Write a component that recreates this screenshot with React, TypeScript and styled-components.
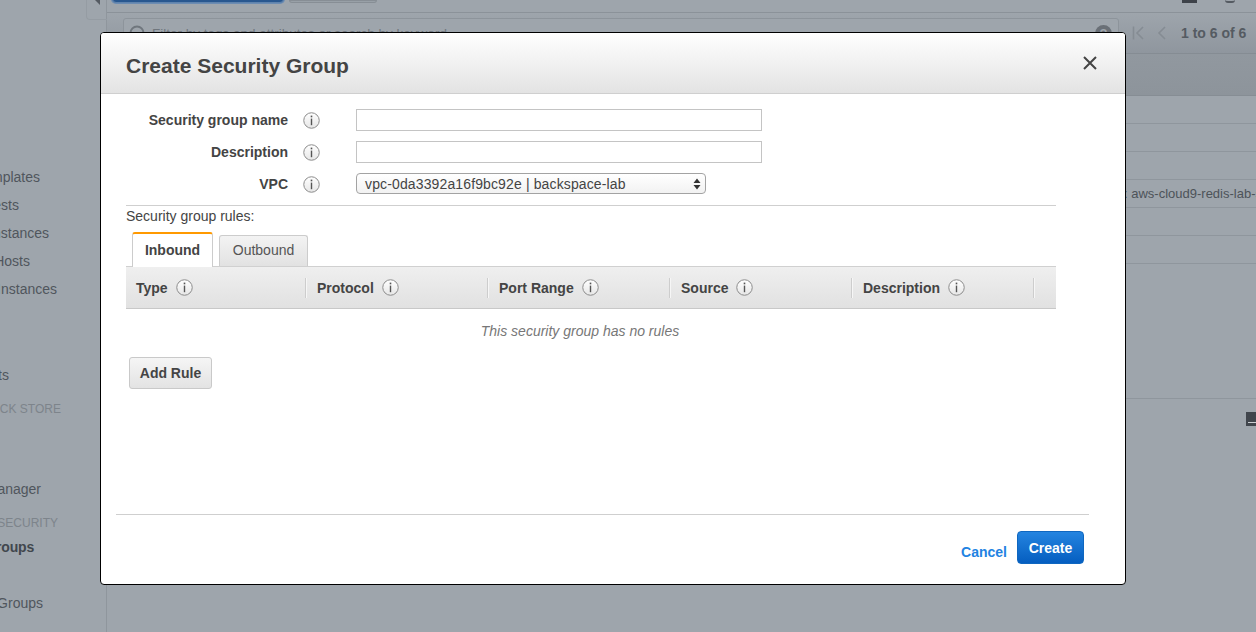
import React from "react";
import styled, { createGlobalStyle } from "styled-components";

const Global = createGlobalStyle`
  html, body { margin: 0; padding: 0; height: 100%; background: #9ea5ac; }
  * { box-sizing: border-box; }
  body { font-family: "Liberation Sans", Arial, sans-serif; color: #444; }
`;

const Page = styled.div`
  position: relative;
  width: 1256px;
  height: 632px;
  display: flex;
  overflow: hidden;
  background: #9ea5ac;
`;

/* --- dimmed console behind the dialog --- */
const Sidebar = styled.nav`
  width: 107px;
  flex: none;
  height: 632px;
  border-right: 1px solid #8f969d;
  position: relative;
`;
const CollapseTab = styled.div`
  position: absolute;
  left: 86px;
  top: -6px;
  width: 21px;
  height: 26px;
  border: 1px solid #959ca3;
  border-right: none;
  border-radius: 0 0 0 4px;
  svg { position: absolute; left: 7px; top: 4px; }
`;
const NavList = styled.ul`
  list-style: none;
  margin: 0;
  padding: 0;
  display: flex;
  flex-direction: column;
`;
const NavItem = styled.li<{ $end: number; $top: number; $bold?: boolean; $caps?: boolean }>`
  width: ${(p) => p.$end}px;
  margin-top: ${(p) => p.$top}px;
  height: 20px;
  line-height: 20px;
  display: flex;
  justify-content: flex-end;
  white-space: nowrap;
  font-size: ${(p) => (p.$caps ? 12 : 14)}px;
  font-weight: ${(p) => (p.$bold ? 700 : 400)};
  letter-spacing: ${(p) => (p.$bold ? "-0.2px" : "0")};
  color: ${(p) => (p.$caps ? "#7d848b" : p.$bold ? "#41474e" : "#50565d")};
`;

const Main = styled.main`
  flex: 1;
  min-width: 0;
  display: flex;
  flex-direction: column;
`;
const TopBar = styled.div`
  height: 13px;
  flex: none;
  padding-left: 5px;
  display: flex;
  gap: 5px;
  border-bottom: 1px solid #8b9299;
  position: relative;
`;
const TopPrimary = styled.div`
  width: 172px;
  height: 6px;
  margin-top: -3px;
  background: #28578f;
  border: 1px solid #5f83ad;
  border-radius: 0 0 4px 4px;
  box-shadow: 0 0 0 1px #6c8cb2;
`;
const TopSecondary = styled.div`
  width: 88px;
  height: 3px;
  background: #98a0a7;
  border: 1px solid #878e95;
  border-radius: 0 0 3px 3px;
`;
const TopIcons = styled.div`
  position: absolute;
  right: 21px;
  top: 0;
  display: flex;
  gap: 28px;
`;
const TopIcon = styled.span<{ $round?: boolean }>`
  width: ${(p) => (p.$round ? 10 : 15)}px;
  height: 3px;
  background: ${(p) => (p.$round ? "transparent" : "#3d4249")};
  border-bottom: ${(p) => (p.$round ? "2px solid #555b62" : "none")};
  border-radius: ${(p) => (p.$round ? "0 0 6px 6px" : "0")};
`;
const FilterBar = styled.div`
  height: 41px;
  flex: none;
  display: flex;
  align-items: flex-start;
  padding: 5px 8px 0 16px;
  background: linear-gradient(#9ea5ac, #8f969e);
  border-bottom: 1px solid #858c93;
`;
const Filter = styled.div`
  width: 996px;
  height: 30px;
  flex: none;
  border: 1px solid #8d949b;
  border-radius: 3px;
  background: #9ea5ac;
  display: flex;
  align-items: center;
  padding: 0 6px 0 5px;
  gap: 7px;
  font-size: 13.5px;
  color: #6f767d;
  white-space: nowrap;
`;
const FilterText = styled.span`
  flex: 1;
`;
const HelpDot = styled.span`
  width: 17px;
  height: 17px;
  border-radius: 50%;
  background: #6a7077;
  color: #9ea5ac;
  font-size: 13px;
  font-weight: 700;
  line-height: 17px;
  text-align: center;
  flex: none;
`;
const Pager = styled.div`
  display: flex;
  align-items: center;
  height: 30px;
  margin-left: 13px;
  font-size: 14px;
  font-weight: 700;
  color: #555b62;
  white-space: nowrap;
  svg { flex: none; }
`;
const PagerGap = styled.span`
  width: 8px;
  flex: none;
`;
const PagerLabel = styled.span`
  margin-left: 13px;
`;
const TableHead = styled.div`
  height: 42px;
  flex: none;
  background: linear-gradient(#91989f, #8d949b);
  border-bottom: 1px solid #868d94;
`;
const Row = styled.div`
  height: 28px;
  flex: none;
  border-bottom: 1px solid #8f969d;
  display: flex;
  align-items: center;
  justify-content: flex-end;
  overflow: hidden;
  font-size: 13px;
  color: #4d5359;
  white-space: nowrap;
`;
const RowText = styled.span`
  width: 132px;
  overflow: hidden;
`;
const DetailPane = styled.div`
  margin-top: 134px;
  flex: 1;
  border-top: 1px solid #8f969d;
  display: flex;
  justify-content: flex-end;
  padding-top: 13px;
`;
const PaneIcon = styled.div`
  width: 10px;
  height: 14px;
  background: #40454c;
  border-bottom: 2px solid #40454c;
  position: relative;
  &::after {
    content: "";
    position: absolute;
    left: 2px;
    right: 0;
    bottom: 1px;
    height: 1px;
    background: #c9cdd1;
  }
`;

/* --- dialog --- */
const Dialog = styled.section`
  position: absolute;
  left: 100px;
  top: 32px;
  width: 1026px;
  height: 553px;
  background: #fff;
  border: 1px solid #000;
  border-radius: 4px;
  display: flex;
  flex-direction: column;
  overflow: hidden;
`;
const DialogHeader = styled.header`
  height: 61px;
  flex: none;
  padding: 0 27px 0 25px;
  display: flex;
  align-items: center;
  justify-content: space-between;
  background: linear-gradient(#ffffff, #e3e3e3);
  border-bottom: 1px solid #cfcfcf;
`;
const Title = styled.h2`
  margin: 5px 0 0;
  font-size: 21px;
  font-weight: 700;
  color: #444;
`;
const CloseButton = styled.button`
  width: 16px;
  height: 16px;
  padding: 0;
  border: 0;
  background: none;
  display: flex;
  svg { display: block; }
`;
const DialogBody = styled.div`
  flex: 1;
  padding: 15px 69px 0 25px;
  display: flex;
  flex-direction: column;
`;
const FormRow = styled.div<{ $gap: number }>`
  display: flex;
  align-items: center;
  margin-bottom: ${(p) => p.$gap}px;
`;
const Label = styled.label`
  width: 162px;
  flex: none;
  text-align: right;
  font-size: 14px;
  font-weight: 700;
  color: #444;
`;
const LabelInfo = styled.span`
  width: 68px;
  height: 22px;
  flex: none;
  padding: 3px 0 0 15px;
  display: flex;
`;
const TextInput = styled.input`
  width: 406px;
  height: 22px;
  border: 1px solid #c4c4c4;
  padding: 0 8px;
  outline: none;
  background: #fff;
`;
const Select = styled.div`
  width: 350px;
  height: 21px;
  margin-bottom: 1px;
  border: 1px solid #a3a3a3;
  border-radius: 4px;
  background: linear-gradient(#fff, #f2f2f2);
  display: flex;
  align-items: center;
  justify-content: space-between;
  padding: 0 4px 0 8px;
  font-size: 14px;
  letter-spacing: 0.13px;
  color: #444;
`;
const Divider = styled.hr`
  width: 930px;
  height: 1px;
  margin: 0;
  border: 0;
  background: #cfcfcf;
`;
const RulesLabel = styled.div`
  font-size: 14px;
  line-height: 16px;
  margin-top: 2px;
  color: #444;
`;
const Tabs = styled.div`
  display: flex;
  align-items: flex-end;
  gap: 6px;
  width: 930px;
  height: 35px;
  margin-top: 7px;
  padding-left: 6px;
`;
const Tab = styled.div<{ $active?: boolean }>`
  height: ${(p) => (p.$active ? 35 : 31)}px;
  width: ${(p) => (p.$active ? 81 : 89)}px;
  padding-bottom: 2px;
  display: flex;
  align-items: center;
  justify-content: center;
  font-size: 14px;
  font-weight: ${(p) => (p.$active ? 700 : 400)};
  color: ${(p) => (p.$active ? "#444" : "#555")};
  background: ${(p) => (p.$active ? "#fff" : "linear-gradient(#f3f3f3, #e2e2e2)")};
  border: 1px solid #ccc;
  border-top: ${(p) => (p.$active ? "2px solid #f90" : "1px solid #ccc")};
  border-bottom: none;
  border-radius: 3px 3px 0 0;
  position: relative;
  z-index: 1;
  margin-bottom: ${(p) => (p.$active ? -1 : 0)}px;
`;
const RulesHead = styled.div`
  width: 930px;
  height: 43px;
  display: grid;
  grid-template-columns: 180px repeat(4, 182px);
  align-items: center;
  background: linear-gradient(#efefef, #e1e1e1);
  border-top: 1px solid #d0d0d0;
  border-bottom: 1px solid #c8c8c8;
`;
const HeadCell = styled.div`
  height: 20px;
  padding-left: 11px;
  display: flex;
  align-items: center;
  gap: 8px;
  font-size: 14px;
  font-weight: 700;
  color: #444;
  border-right: 1px solid #cdcdcd;
  box-shadow: 1px 0 0 #f6f6f6;
  &:first-child { padding-left: 10px; }
`;
const EmptyNote = styled.div`
  width: 908px;
  height: 16px;
  margin-top: 14px;
  text-align: center;
  font-size: 14px;
  line-height: 16px;
  font-style: italic;
  color: #777;
`;
const AddRule = styled.button`
  align-self: flex-start;
  width: 83px;
  height: 32px;
  margin: 18px 0 0 3px;
  border: 1px solid #c9c9c9;
  border-radius: 3px;
  background: linear-gradient(#f5f5f5, #e3e3e3);
  font: 700 14px "Liberation Sans", Arial, sans-serif;
  color: #444;
  padding: 0;
`;
const DialogFooter = styled.footer`
  height: 70px;
  flex: none;
  margin: 0 36px 0 15px;
  padding: 16px 5px 0 0;
  border-top: 1px solid #cfcfcf;
  display: flex;
  justify-content: flex-end;
  gap: 10px;
`;
const CancelLink = styled.a`
  margin-top: 13px;
  font-size: 14px;
  line-height: 16px;
  font-weight: 700;
  color: #2283e2;
  cursor: pointer;
`;
const CreateButton = styled.button`
  width: 67px;
  height: 33px;
  padding: 0;
  border: 1px solid #0f67c0;
  border-radius: 4px;
  background: linear-gradient(#2484e0, #055ec0);
  color: #fff;
  font: 700 14px "Liberation Sans", Arial, sans-serif;
`;

const Info = () => (
  <svg width="17" height="17" viewBox="0 0 17 17" aria-hidden="true">
    <defs>
      <linearGradient id="infoFill" x1="0" y1="0" x2="0" y2="1">
        <stop offset="0" stopColor="#ffffff" />
        <stop offset="1" stopColor="#e6e6e6" />
      </linearGradient>
    </defs>
    <circle cx="8.5" cy="8.5" r="7.75" fill="url(#infoFill)" stroke="#8c8c8c" strokeWidth="1" />
    <rect x="7.7" y="3.6" width="1.6" height="1.7" fill="#555" />
    <rect x="7.8" y="6.6" width="1.4" height="6.6" fill="#555" />
  </svg>
);

const Columns = ["Type", "Protocol", "Port Range", "Source", "Description"];
const Rows = ["", "", "", ": aws-cloud9-redis-lab-server", "", ""];

export default function App() {
  return (
    <Page>
      <Global />
      <Sidebar>
        <CollapseTab>
          <svg width="7" height="10" viewBox="0 0 7 10">
            <path d="M6 0 L0 0 L6 6 Z" fill="#555b62" />
          </svg>
        </CollapseTab>
        <NavList>
          <NavItem $end={40} $top={167}>Launch Templates</NavItem>
          <NavItem $end={19} $top={8}>Spot Requests</NavItem>
          <NavItem $end={49} $top={8}>Reserved Instances</NavItem>
          <NavItem $end={30} $top={8}>Dedicated Hosts</NavItem>
          <NavItem $end={57} $top={8}>Scheduled Instances</NavItem>
          <NavItem $end={9} $top={66}>Snapshots</NavItem>
          <NavItem $end={61} $top={14} $caps>ELASTIC BLOCK STORE</NavItem>
          <NavItem $end={41} $top={60}>Lifecycle Manager</NavItem>
          <NavItem $end={58} $top={14} $caps>NETWORK &amp; SECURITY</NavItem>
          <NavItem $end={34} $top={4} $bold>Security Groups</NavItem>
          <NavItem $end={43} $top={36}>Placement Groups</NavItem>
        </NavList>
      </Sidebar>
      <Main>
        <TopBar>
          <TopPrimary />
          <TopSecondary />
          <TopIcons>
            <TopIcon />
            <TopIcon $round />
          </TopIcons>
        </TopBar>
        <FilterBar>
          <Filter>
            <svg width="16" height="16" viewBox="0 0 16 16">
              <circle cx="8" cy="8" r="6.5" fill="none" stroke="#6f767d" strokeWidth="2" />
            </svg>
            <FilterText>Filter by tags and attributes or search by keyword</FilterText>
            <HelpDot>?</HelpDot>
          </Filter>
          <Pager>
            <svg width="16" height="14" viewBox="0 0 16 14">
              <path d="M1.5 0.5V13.5M11 1L5 7L11 13" fill="none" stroke="#858c93" strokeWidth="1.6" />
            </svg>
            <PagerGap />
            <svg width="12" height="14" viewBox="0 0 12 14">
              <path d="M9 1L3 7L9 13" fill="none" stroke="#858c93" strokeWidth="1.6" />
            </svg>
            <PagerLabel>1 to 6 of 6</PagerLabel>
          </Pager>
        </FilterBar>
        <TableHead />
        {Rows.map((text, i) => (
          <Row key={i}>{text && <RowText>{text}</RowText>}</Row>
        ))}
        <DetailPane>
          <PaneIcon />
        </DetailPane>
      </Main>

      <Dialog>
        <DialogHeader>
          <Title>Create Security Group</Title>
          <CloseButton aria-label="Close">
            <svg width="16" height="16" viewBox="0 0 16 16">
              <path d="M2 2L14 14M14 2L2 14" stroke="#444" strokeWidth="2" fill="none" />
            </svg>
          </CloseButton>
        </DialogHeader>
        <DialogBody>
          <FormRow $gap={10}>
            <Label>Security group name</Label>
            <LabelInfo><Info /></LabelInfo>
            <TextInput />
          </FormRow>
          <FormRow $gap={10}>
            <Label>Description</Label>
            <LabelInfo><Info /></LabelInfo>
            <TextInput />
          </FormRow>
          <FormRow $gap={10}>
            <Label>VPC</Label>
            <LabelInfo><Info /></LabelInfo>
            <Select>
              <span>vpc-0da3392a16f9bc92e | backspace-lab</span>
              <svg width="8" height="12" viewBox="0 0 8 12">
                <path d="M4 0.5L7.5 5H0.5ZM4 11.5L0.5 7H7.5Z" fill="#333" />
              </svg>
            </Select>
          </FormRow>
          <Divider />
          <RulesLabel>Security group rules:</RulesLabel>
          <Tabs>
            <Tab $active>Inbound</Tab>
            <Tab>Outbound</Tab>
          </Tabs>
          <RulesHead>
            {Columns.map((c) => (
              <HeadCell key={c}>
                {c} <Info />
              </HeadCell>
            ))}
          </RulesHead>
          <EmptyNote>This security group has no rules</EmptyNote>
          <AddRule>Add Rule</AddRule>
        </DialogBody>
        <DialogFooter>
          <CancelLink>Cancel</CancelLink>
          <CreateButton>Create</CreateButton>
        </DialogFooter>
      </Dialog>
    </Page>
  );
}
